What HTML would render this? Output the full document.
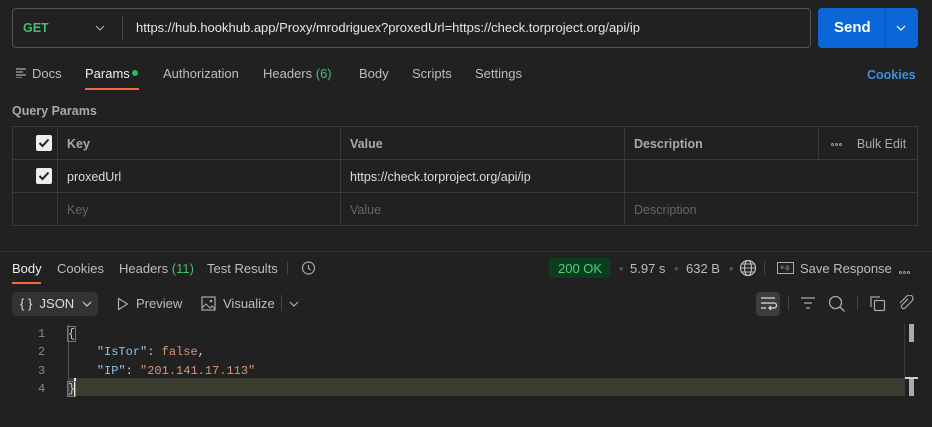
<!DOCTYPE html>
<html><head><style>
*{box-sizing:border-box;margin:0;padding:0}
body{width:932px;height:427px;background:#212121;font-family:"Liberation Sans",sans-serif;color:#bdbdbd;font-size:13px;position:relative;overflow:hidden}
.a{position:absolute;white-space:nowrap}
.mono{font-family:"Liberation Mono",monospace;font-size:12px}
table{border-collapse:collapse;position:absolute;left:12px;top:126px;width:906px}
td{border:1px solid #3a3a3a;height:33px;padding-left:9px;font-size:12.5px;padding-top:2px}
.dot{display:inline-block;width:3px;height:3px;border:1px solid #999;border-radius:50%;margin-right:1px;vertical-align:middle}
</style></head><body>
<div class="a" style="left:12px;top:8px;width:799px;height:40px;border:1px solid #555;border-radius:4px"></div>
<div class="a" style="left:23px;top:21px;color:#3fbf6f;font-weight:bold;font-size:12.5px">GET</div>
<svg class="a" style="left:95px;top:24px" width="10" height="8"><path d="M1 2l4 4 4-4" stroke="#aaa" fill="none" stroke-width="1.2"/></svg>
<div class="a" style="left:122px;top:16px;width:1px;height:24px;background:#444"></div>
<div class="a" style="left:136px;top:20px;color:#e6e6e6;font-size:13px">https://hub.hookhub.app/Proxy/mrodriguex?proxedUrl=https://check.torproject.org/api/ip</div>
<div class="a" style="left:818px;top:8px;width:100px;height:40px;background:#0b66d8;border-radius:4px"></div>
<div class="a" style="left:885px;top:8px;width:1px;height:40px;background:#0a58ba"></div>
<div class="a" style="left:834px;top:19px;color:#fff;font-weight:bold;font-size:15px">Send</div>
<svg class="a" style="left:896px;top:24px" width="10" height="8"><path d="M1 2l4 4 4-4" stroke="#fff" fill="none" stroke-width="1.2"/></svg>

<svg class="a" style="left:16px;top:68px" width="10" height="10"><path d="M0 1h10M0 4h7M0 7h10M0 10h6" stroke="#aaa" stroke-width="1.2"/></svg>
<div class="a" style="left:32px;top:66px">Docs</div>
<div class="a" style="left:85px;top:66px;color:#eee">Params</div>
<div class="a" style="left:132px;top:70px;width:6px;height:6px;border-radius:50%;background:#1fbf5f"></div>
<div class="a" style="left:85px;top:88px;width:54px;height:2px;background:#f06a3a"></div>
<div class="a" style="left:163px;top:66px">Authorization</div>
<div class="a" style="left:263px;top:66px">Headers <span style="color:#3fbf6f">(6)</span></div>
<div class="a" style="left:359px;top:66px">Body</div>
<div class="a" style="left:412px;top:66px">Scripts</div>
<div class="a" style="left:475px;top:66px">Settings</div>
<div class="a" style="left:867px;top:68px;color:#3d8fe0;font-weight:bold;font-size:12.5px">Cookies</div>
<div class="a" style="left:12px;top:104px;font-weight:bold;font-size:12.5px;color:#aaa">Query Params</div>

<table>
<tr><td style="width:45px"></td><td style="width:283px;font-weight:bold;color:#aaa">Key</td><td style="width:284px;font-weight:bold;color:#aaa">Value</td><td style="width:194px;font-weight:bold;color:#aaa">Description</td><td style="color:#aaa;padding-left:12px"><span class="dot"></span><span class="dot"></span><span class="dot"></span>&nbsp;&nbsp;&nbsp;&nbsp;Bulk Edit</td></tr>
<tr><td></td><td style="color:#ddd">proxedUrl</td><td style="color:#ddd">https://check.torproject.org/api/ip</td><td colspan="2"></td></tr>
<tr><td></td><td style="color:#666">Key</td><td style="color:#666">Value</td><td colspan="2" style="color:#666">Description</td></tr>
</table>
<div class="a" style="left:36px;top:135px;width:16px;height:16px;background:#eee;border-radius:2px"></div>
<svg class="a" style="left:36px;top:135px" width="16" height="16"><path d="M3.5 8l3 3 6-6.5" stroke="#222" stroke-width="2" fill="none"/></svg>
<div class="a" style="left:36px;top:168px;width:16px;height:16px;background:#eee;border-radius:2px"></div>
<svg class="a" style="left:36px;top:168px" width="16" height="16"><path d="M3.5 8l3 3 6-6.5" stroke="#222" stroke-width="2" fill="none"/></svg>

<div class="a" style="left:0;top:251px;width:932px;height:1px;background:#333"></div>
<div class="a" style="left:12px;top:261px;color:#eee">Body</div>
<div class="a" style="left:12px;top:282px;width:29px;height:2px;background:#f06a3a"></div>
<div class="a" style="left:57px;top:261px">Cookies</div>
<div class="a" style="left:119px;top:261px">Headers <span style="color:#3fbf6f">(11)</span></div>
<div class="a" style="left:207px;top:261px">Test Results</div>
<div class="a" style="left:287px;top:261px;width:1px;height:14px;background:#444"></div>
<svg class="a" style="left:300px;top:260px" width="16" height="16"><circle cx="8.5" cy="8" r="6" stroke="#aaa" fill="none" stroke-width="1.2"/><path d="M8.5 5v3.5l2 1.5" stroke="#aaa" fill="none" stroke-width="1.2"/></svg>

<div class="a" style="left:549px;top:258px;width:61px;height:20px;background:#0b3d1f;border-radius:3px"></div>
<div class="a" style="left:558px;top:261px;color:#4fd07f">200 OK</div>
<div class="a" style="left:619px;top:261px;color:#555">•</div>
<div class="a" style="left:630px;top:261px">5.97 s</div>
<div class="a" style="left:674px;top:261px;color:#555">•</div>
<div class="a" style="left:686px;top:261px">632 B</div>
<div class="a" style="left:729px;top:261px;color:#555">•</div>
<svg class="a" style="left:739px;top:259px" width="18" height="18"><circle cx="9" cy="9" r="7.5" stroke="#bbb" fill="none" stroke-width="1.2"/><ellipse cx="9" cy="9" rx="3.5" ry="7.5" stroke="#bbb" fill="none" stroke-width="1.2"/><path d="M1.5 9h15M3 5h12M3 13h12" stroke="#bbb" stroke-width="1.1"/></svg>
<div class="a" style="left:764px;top:261px;width:1px;height:14px;background:#444"></div>
<div class="a" style="left:777px;top:262px;width:17px;height:12px;border:1px solid #aaa;font-size:6px;color:#aaa;text-align:center;line-height:10px">e.g.</div>
<div class="a" style="left:800px;top:261px">Save Response</div>
<div class="a" style="left:899px;top:264px"><span class="dot"></span><span class="dot"></span><span class="dot"></span></div>

<div class="a" style="left:12px;top:292px;width:86px;height:24px;background:#333;border-radius:4px"></div>
<div class="a" style="left:20px;top:296px;color:#ddd">{ }&nbsp; JSON</div>
<svg class="a" style="left:82px;top:300px" width="10" height="8"><path d="M1 2l4 4 4-4" stroke="#ccc" fill="none" stroke-width="1.2"/></svg>
<svg class="a" style="left:117px;top:297px" width="12" height="14"><path d="M1.5 1.5l9 5.5-9 5.5z" stroke="#aaa" fill="none" stroke-width="1.2"/></svg>
<div class="a" style="left:136px;top:296px">Preview</div>
<svg class="a" style="left:201px;top:296px" width="15" height="15"><rect x="1" y="1" width="13" height="13" stroke="#aaa" fill="none" stroke-width="1.2"/><path d="M1 12l4-4 4 4 2-2 3 3" stroke="#aaa" fill="none" stroke-width="1.1"/><circle cx="10" cy="5" r="1.3" fill="#aaa"/></svg>
<div class="a" style="left:223px;top:296px">Visualize</div>
<div class="a" style="left:281px;top:295px;width:1px;height:16px;background:#444"></div>
<svg class="a" style="left:289px;top:300px" width="10" height="8"><path d="M1 2l4 4 4-4" stroke="#aaa" fill="none" stroke-width="1.2"/></svg>

<div class="a" style="left:756px;top:292px;width:24px;height:24px;background:#3c3c3c;border-radius:4px"></div>
<svg class="a" style="left:759px;top:296px" width="18" height="16"><path d="M2 2h14M2 7h13a2.5 2.5 0 010 5h-5M12 10l-2 2 2 2M2 12h5" stroke="#ddd" fill="none" stroke-width="1.2"/></svg>
<div class="a" style="left:788px;top:296px;width:1px;height:14px;background:#444"></div>
<svg class="a" style="left:800px;top:296px" width="16" height="14"><path d="M1 2h14M4 7h8M6 12h4" stroke="#aaa" stroke-width="1.2"/></svg>
<svg class="a" style="left:828px;top:295px" width="18" height="18"><circle cx="7.5" cy="7.5" r="6" stroke="#aaa" fill="none" stroke-width="1.3"/><path d="M12 12l4.5 4.5" stroke="#aaa" stroke-width="1.3"/></svg>
<div class="a" style="left:857px;top:296px;width:1px;height:14px;background:#444"></div>
<svg class="a" style="left:870px;top:295px" width="16" height="17"><path d="M1 12V2h9" stroke="#aaa" fill="none" stroke-width="1.2"/><rect x="4.5" y="5.5" width="10" height="10" rx="1" stroke="#aaa" fill="none" stroke-width="1.2"/></svg>
<svg class="a" style="left:898px;top:295px" width="16" height="17"><path d="M10 4l-6 6a2 2 0 003 3l7-7a3.5 3.5 0 00-5-5L2 8" stroke="#aaa" fill="none" stroke-width="1.2"/></svg>

<div class="a" style="left:68px;top:378px;width:837px;height:18px;background:#3c3c30"></div>
<div class="a" style="left:68px;top:324px;width:1px;height:72px;background:#555"></div>
<div class="a" style="left:904px;top:324px;width:1px;height:72px;background:#3a3a3a"></div>
<div class="a" style="left:909px;top:324px;width:5px;height:18px;background:#aaa"></div>
<div class="a" style="left:909px;top:379px;width:5px;height:17px;background:#aaa"></div>
<div class="a" style="left:905px;top:377px;width:13px;height:2px;background:#ccc"></div>
<div class="a" style="left:74px;top:378px;width:2px;height:18px;background:#eee"></div>
<div class="a mono" style="left:38px;top:325px;color:#888;line-height:18.3px">1<br>2<br>3<br>4</div>
<div class="a mono" style="left:68px;top:325px;line-height:18.3px;color:#ccc"><span style="outline:1px solid #777">{</span><br>&nbsp;&nbsp;&nbsp;&nbsp;<span style="color:#8fc4e6">"IsTor"</span>: <span style="color:#d8947a">false</span>,<br>&nbsp;&nbsp;&nbsp;&nbsp;<span style="color:#8fc4e6">"IP"</span>: <span style="color:#d8947a">"201.141.17.113"</span><br><span style="outline:1px solid #777">}</span></div>
</body></html>
